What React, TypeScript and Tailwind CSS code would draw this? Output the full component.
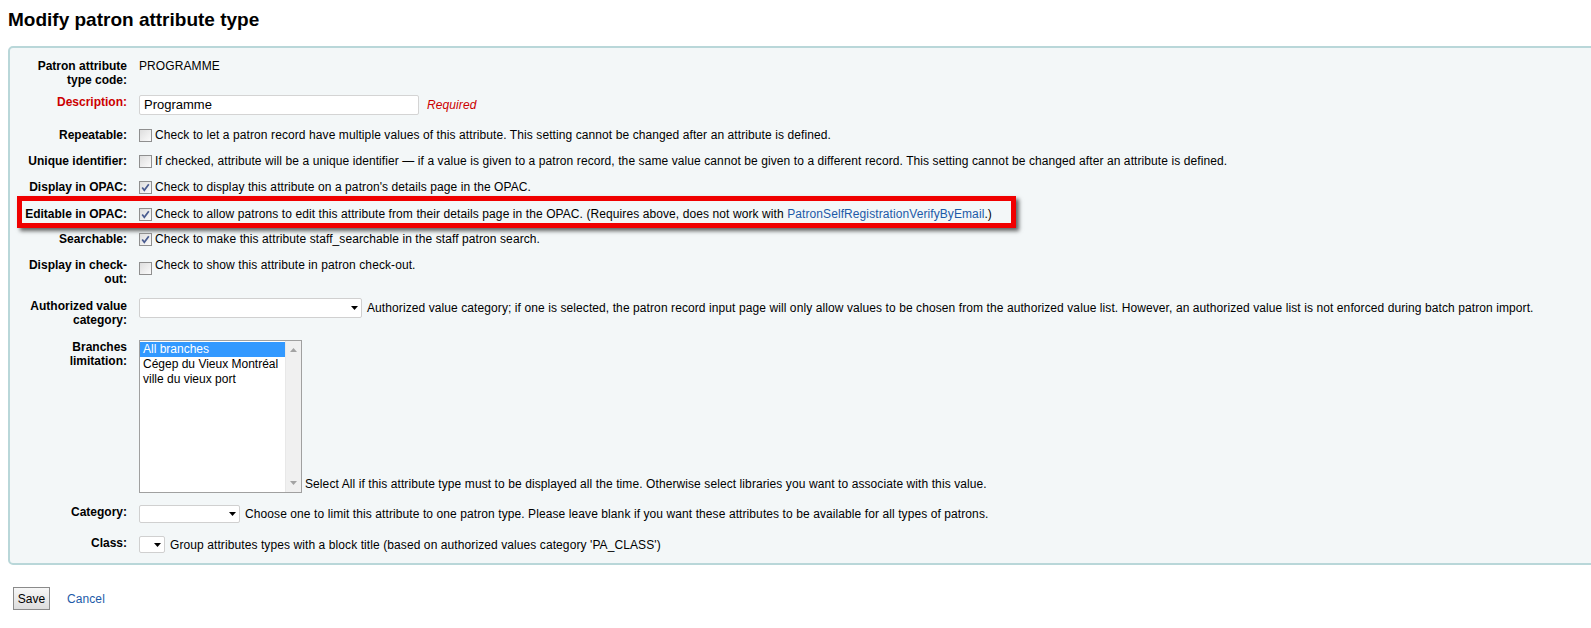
import { ReactNode } from "react";

// checkbox drawn like the old windows control in the screenshot
function Check({ checked }: { checked?: boolean }) {
  return (
    <span className="mt-[1px] mr-[3px] flex h-[13px] w-[13px] shrink-0 items-center justify-center border border-[#8f8f8f] bg-gradient-to-br from-[#dedede] to-[#fbfbfb]">
      {checked && (
        <svg width="11" height="11" viewBox="0 0 11 11">
          <path d="M2.2 5.6 L4.3 8.3 L8.8 2.2" fill="none" stroke="#4a5c90" strokeWidth="1.7" />
        </svg>
      )}
    </span>
  );
}

function Arrow() {
  return (
    <svg width="7" height="4" viewBox="0 0 7 4">
      <path d="M0 0 H7 L3.5 4 Z" fill="#000" />
    </svg>
  );
}

function Row({
  label,
  mt,
  children,
  labelClass = "text-black",
}: {
  label: ReactNode;
  mt: string;
  children: ReactNode;
  labelClass?: string;
}) {
  return (
    <div className={`relative flex items-start ${mt}`}>
      <div className={`mr-[12px] w-[108px] shrink-0 text-right font-bold leading-[14px] tracking-normal ${labelClass}`}>
        {label}
      </div>
      {children}
    </div>
  );
}

export default function App() {
  return (
    <div className="min-h-[628px] w-full overflow-hidden bg-white font-['Liberation_Sans',Arial,sans-serif] text-[12px] tracking-[0.09px] text-black">
      <h1 className="pl-[8px] pt-[9px] text-[19px] font-bold leading-[22px] tracking-normal text-black">
        Modify patron attribute type
      </h1>

      {/* fieldset.rows */}
      <div className="mt-[15px] ml-[8px] w-[1620px] rounded-[5px] border-2 border-[#b9d7d9] bg-[#f3f7f8] pl-[9px] pt-[11px] pb-[10px]">
        <Row label={<>Patron attribute<br />type code:</>} mt="mt-0">
          <span className="leading-[14px]">PROGRAMME</span>
        </Row>

        <Row label="Description:" mt="mt-[8px]" labelClass="text-[#cc0000]">
          <div className="flex items-center">
            <div className="flex h-[20px] w-[280px] items-center rounded-[2px] border border-[#d4d4d4] bg-white px-[4px] text-[13px] tracking-normal">
              Programme
            </div>
            <span className="ml-[8px] italic text-[#cc0000]">Required</span>
          </div>
        </Row>

        <Row label="Repeatable:" mt="mt-[13px]">
          <Check />
          <span className="leading-[14px]">
            Check to let a patron record have multiple values of this attribute. This setting cannot be changed after an attribute is defined.
          </span>
        </Row>

        <Row label="Unique identifier:" mt="mt-[12px]">
          <Check />
          <span className="leading-[14px]">
            If checked, attribute will be a unique identifier — if a value is given to a patron record, the same value cannot be given to a different record. This setting cannot be changed after an attribute is defined.
          </span>
        </Row>

        <Row label="Display in OPAC:" mt="mt-[12px]">
          <Check checked />
          <span className="leading-[14px]">
            Check to display this attribute on a patron's details page in the OPAC.
          </span>
        </Row>

        <Row label="Editable in OPAC:" mt="mt-[13px]">
          <Check checked />
          <span className="leading-[14px]">
            Check to allow patrons to edit this attribute from their details page in the OPAC. (Requires above, does not work with{" "}
            <a className="text-[#1c5aa8]">PatronSelfRegistrationVerifyByEmail</a>.)
          </span>
          {/* red highlight frame from the screenshot */}
          <div className="pointer-events-none absolute -left-[2px] -top-[11px] h-[32px] w-[999px] border-[5px] border-[#f00000] shadow-[3px_3px_4px_rgba(0,0,0,0.6)]" />
        </Row>

        <Row label="Searchable:" mt="mt-[11px]">
          <Check checked />
          <span className="leading-[14px]">
            Check to make this attribute staff_searchable in the staff patron search.
          </span>
        </Row>

        <Row label={<>Display in check-<br />out:</>} mt="mt-[12px]">
          <div className="mt-[3px] flex">
            <Check />
          </div>
          <span className="leading-[14px]">Check to show this attribute in patron check-out.</span>
        </Row>

        <Row label={<div className="mt-[1px]">Authorized value<br />category:</div>} mt="mt-[12px]">
          <div className="flex items-center">
            <div className="flex h-[20px] w-[223px] items-center justify-end rounded-[2px] border border-[#d0d0d0] bg-white pr-[3px]">
              <Arrow />
            </div>
            <span className="ml-[5px] leading-[14px]">
              Authorized value category; if one is selected, the patron record input page will only allow values to be chosen from the authorized value list. However, an authorized value list is not enforced during batch patron import.
            </span>
          </div>
        </Row>

        <Row label={<>Branches<br />limitation:</>} mt="mt-[13px]">
          <div className="flex h-[153px] w-[163px] border border-[#a0a0a0] bg-white tracking-normal">
            <div className="flex-1 pt-[1px]">
              <div className="h-[15px] bg-[#3399ff] pl-[3px] leading-[15px] text-white">All branches</div>
              <div className="h-[15px] pl-[3px] leading-[15px]">Cégep du Vieux Montréal</div>
              <div className="h-[15px] pl-[3px] leading-[15px]">ville du vieux port</div>
            </div>
            <div className="flex w-[16px] flex-col items-center justify-between border-l border-[#e8e8e8] bg-[#f0f0f0] py-[7px]">
              <svg width="7" height="4" viewBox="0 0 7 4">
                <path d="M0 4 H7 L3.5 0 Z" fill="#a3a3a3" />
              </svg>
              <svg width="7" height="4" viewBox="0 0 7 4">
                <path d="M0 0 H7 L3.5 4 Z" fill="#a3a3a3" />
              </svg>
            </div>
          </div>
          <span className="mb-[2px] ml-[3px] self-end leading-[14px]">
            Select All if this attribute type must to be displayed all the time. Otherwise select libraries you want to associate with this value.
          </span>
        </Row>

        <Row label="Category:" mt="mt-[12px]">
          <div className="flex items-center">
            <div className="flex h-[18px] w-[101px] items-center justify-end rounded-[2px] border border-[#d0d0d0] bg-white pr-[3px]">
              <Arrow />
            </div>
            <span className="ml-[5px] leading-[14px]">
              Choose one to limit this attribute to one patron type. Please leave blank if you want these attributes to be available for all types of patrons.
            </span>
          </div>
        </Row>

        <Row label="Class:" mt="mt-[13px]">
          <div className="flex items-center">
            <div className="flex h-[17px] w-[26px] items-center justify-end rounded-[2px] border border-[#d0d0d0] bg-white pr-[3px]">
              <Arrow />
            </div>
            <span className="ml-[5px] leading-[14px]">
              Group attributes types with a block title (based on authorized values category 'PA_CLASS')
            </span>
          </div>
        </Row>
      </div>

      <div className="mt-[22px] ml-[13px] flex items-center">
        <button
          type="button"
          className="h-[23px] w-[37px] border border-[#8a8a8a] bg-gradient-to-b from-[#f7f7f7] to-[#dddddd] text-[12px] tracking-normal text-black"
        >
          Save
        </button>
        <a className="ml-[17px] text-[#1c5aa8]">Cancel</a>
      </div>
    </div>
  );
}
